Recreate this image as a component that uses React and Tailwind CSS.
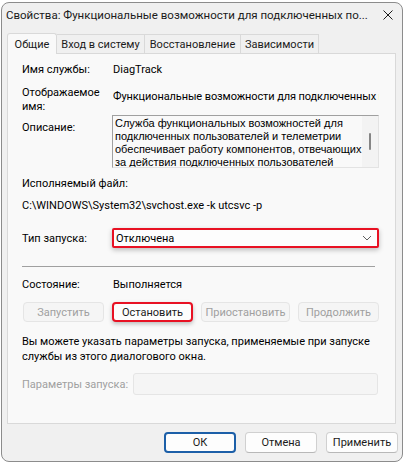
import React from 'react';

const font = { fontFamily: 'Roboto, "Noto Sans", sans-serif' };

const Tab = ({ label, active }) =>
    active ? (
        <div className="h-[21px] w-[50px] -mb-px z-10 bg-[#f9f9f9] border border-b-0 border-[#d9d9d9] rounded-t-[3px] flex items-center justify-center text-[#1b1b1b]">
            {label}
        </div>
    ) : (
        <div className="h-[19px] bg-[#f0f0f0] border border-l-0 border-b-0 border-[#d9d9d9] flex items-center justify-center whitespace-nowrap text-[#1b1b1b]">
            {label}
        </div>
    );

const Btn = ({ children, disabled, marked, def, className = '' }) => {
    let look = 'bg-[#fdfdfd] border border-[#d0d0d0] border-b-[#b8b8b8] text-[#1b1b1b]';
    if (disabled) look = 'bg-[#f5f5f5] border border-[#e5e5e5] text-[#a0a0a0]';
    if (marked) look = 'bg-[#fdfdfd] border-2 border-[#e81123] text-[#1b1b1b] shadow-[0_2px_4px_rgba(0,0,0,0.25)]';
    if (def) look = 'bg-[#fdfdfd] border-2 border-[#1c5fa8] text-[#1b1b1b]';
    return (
        <div className={`h-[20px] rounded-[4px] flex items-center justify-center whitespace-nowrap ${look} ${className}`}>
            {children}
        </div>
    );
};

export default function App() {
    return (
        <div className="w-[406px] h-[463px] bg-white overflow-hidden text-[11px] leading-[15px] text-black" style={font}>
            <div className="ml-px mt-[2px] w-[402px] h-[460px] bg-[#f0f0f0] border border-[#8c8c8c] rounded-[8px] flex flex-col">
                {/* Title bar */}
                <div className="h-[24px] flex items-center pl-[4px] pr-[9px]">
                    <span className="text-[11.5px] text-[#1b1b1b] whitespace-nowrap">
                        Свойства: Функциональные возможности для подключенных по...
                    </span>
                    <svg width="10" height="10" viewBox="0 0 10 10" className="shrink-0 ml-auto">
                        <path d="M0.5 0.5 L9.5 9.5 M9.5 0.5 L0.5 9.5" stroke="#1b1b1b" strokeWidth="1" />
                    </svg>
                </div>

                {/* Tabs */}
                <div className="h-[26px] pl-[5px] flex items-end">
                    <Tab label="Общие" active />
                    <div className="w-[88px]"><Tab label="Вход в систему" /></div>
                    <div className="w-[96px]"><Tab label="Восстановление" /></div>
                    <div className="w-[78px]"><Tab label="Зависимости" /></div>
                </div>

                {/* Tab page */}
                <div className="ml-[5px] w-[389px] h-[371px] bg-[#f9f9f9] border border-[#d9d9d9] pl-[14px] pr-[16px] flex flex-col">
                    <div className="mt-[8px] flex">
                        <div className="w-[91px]">Имя службы:</div>
                        <div>DiagTrack</div>
                    </div>

                    <div className="mt-[9px] flex h-[28px]">
                        <div className="w-[91px] leading-[14px] shrink-0">Отображаемое<br />имя:</div>
                        <div className="pt-[3px] whitespace-nowrap overflow-hidden w-[268px] tracking-[-0.1px]">
                            Функциональные возможности для подключенных г
                        </div>
                    </div>

                    <div className="mt-px flex">
                        <div className="w-[90px] pt-[5px] shrink-0">Описание:</div>
                        <div className="w-[267px] h-[53px] bg-[#f9f9f9] border border-[#a0a0a0] border-b-[#e3e3e3] border-r-[#e3e3e3] flex">
                            <div
                                className="flex-1 pl-[2px] pt-[1px] text-[11px] leading-[13px] overflow-hidden whitespace-nowrap"
                                style={{ fontFamily: '"Liberation Sans", Arial, sans-serif' }}
                            >
                                Служба функциональных возможностей для<br />
                                подключенных пользователей и телеметрии<br />
                                обеспечивает работу компонентов, отвечающих<br />
                                за действия подключенных пользователей
                            </div>
                            <div className="w-[16px] bg-[#f3f3f3] flex justify-center pt-[17px]">
                                <div className="w-[2px] h-[17px] bg-[#858585] rounded-full" />
                            </div>
                        </div>
                    </div>

                    <div className="mt-[8px]">Исполняемый файл:</div>
                    <div className="mt-[7px]">C:\WINDOWS\System32\svchost.exe -k utcsvc -p</div>

                    <div className="mt-[15px] flex items-center">
                        <div className="w-[90px]">Тип запуска:</div>
                        <div className="w-[267px] h-[20px] bg-[#fdfdfd] border-2 border-[#e81123] rounded-[2px] shadow-[0_2px_5px_rgba(0,0,0,0.25)] flex items-center justify-between pl-[2px] pr-[5px]">
                            <span>Отключена</span>
                            <svg width="10" height="6" viewBox="0 0 10 6">
                                <path d="M1 1 L5 5 L9 1" fill="none" stroke="#5f5f5f" strokeWidth="1" />
                            </svg>
                        </div>
                    </div>

                    <div className="mt-[18px] h-px w-[353px] bg-[#a0a0a0]" />

                    <div className="mt-[10px] flex">
                        <div className="w-[91px]">Состояние:</div>
                        <div>Выполняется</div>
                    </div>

                    <div className="mt-[10px] flex gap-[8px] pl-px">
                        <Btn disabled className="w-[81px]">Запустить</Btn>
                        <Btn marked className="w-[81px]">Остановить</Btn>
                        <Btn disabled className="w-[89px]">Приостановить</Btn>
                        <Btn disabled className="w-[81px]">Продолжить</Btn>
                    </div>

                    <div className="mt-[12px] whitespace-nowrap">
                        Вы можете указать параметры запуска, применяемые при запуске<br />
                        службы из этого диалогового окна.
                    </div>

                    <div className="mt-[9px] flex items-center">
                        <div className="w-[111px] text-[#a0a0a0] whitespace-nowrap">Параметры запуска:</div>
                        <div className="w-[245px] h-[22px] bg-[#f5f5f5] border border-[#e5e5e5] rounded-[3px]" />
                    </div>
                </div>

                {/* Footer buttons */}
                <div className="mt-[8px] flex justify-end gap-[9px] pr-[4px]">
                    <Btn def className="w-[72px] h-[21px]">ОК</Btn>
                    <Btn className="w-[72px] h-[21px]">Отмена</Btn>
                    <Btn className="w-[72px] h-[21px]">Применить</Btn>
                </div>
            </div>
        </div>
    );
}
